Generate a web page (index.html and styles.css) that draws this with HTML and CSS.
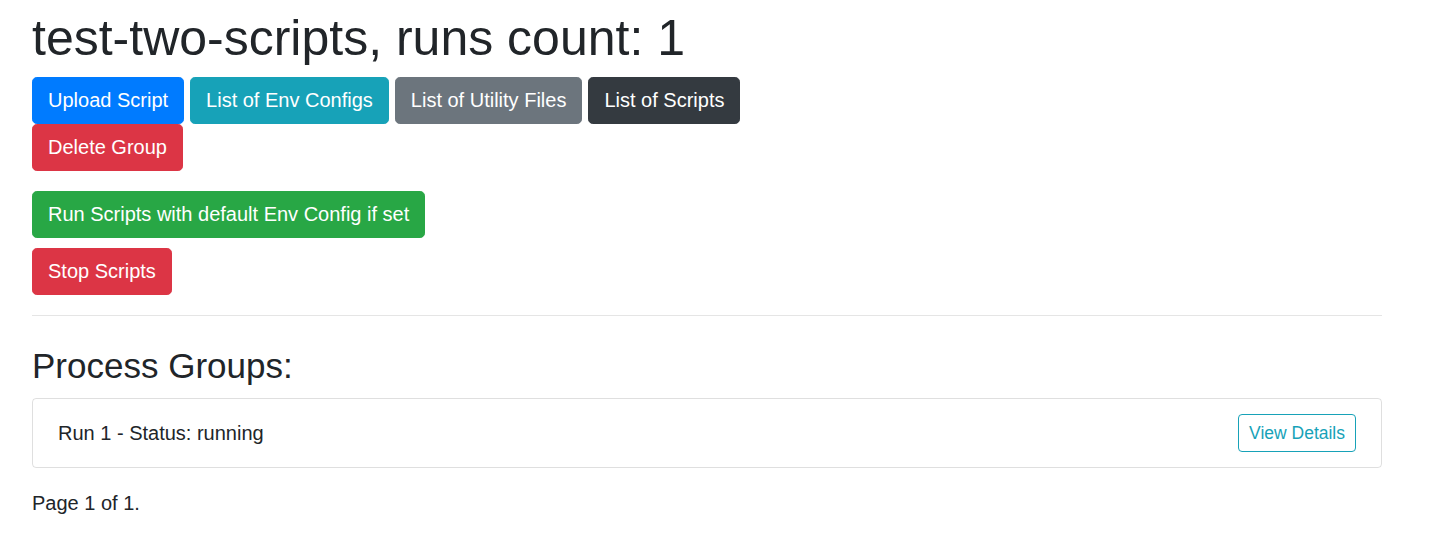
FILE: index.html
```html
<!DOCTYPE html>
<html lang="en">
<head>
<meta charset="utf-8">
<title>test-two-scripts</title>
<link rel="stylesheet" href="styles.css">
</head>
<body>
<div class="page">
  <h1 class="title">test-two-scripts, runs count: 1</h1>
  <div class="toolbar">
    <a class="btn btn-primary">Upload Script</a>
    <a class="btn btn-info">List of Env Configs</a>
    <a class="btn btn-secondary">List of Utility Files</a>
    <a class="btn btn-dark">List of Scripts</a>
    <a class="btn btn-danger">Delete Group</a>
  </div>
  <div class="actions">
    <button class="btn btn-success">Run Scripts with default Env Config if set</button>
    <button class="btn btn-danger">Stop Scripts</button>
  </div>
  <hr class="divider">
  <h2 class="section-title">Process Groups:</h2>
  <div class="card">
    <h5 class="run-title">Run 1 - Status: running</h5>
    <a class="btn-outline-info">View Details</a>
  </div>
  <p class="pager">Page 1 of 1.</p>
</div>
</body>
</html>
```

FILE: styles.css
```css
* { box-sizing: border-box; }

body {
  margin: 0;
  font-family: "Liberation Sans", Arial, Helvetica, sans-serif;
  color: #212529;
  background: #fff;
}

.page {
  padding: 8px 0 0 32px;
  width: 1382px;
}

.title {
  font-size: 50px;
  line-height: 60px;
  font-weight: normal;
  margin: 0 0 9px;
}

.toolbar {
  display: flex;
  flex-wrap: wrap;
  column-gap: 6px;
  max-width: 760px;
}

.btn {
  display: inline-block;
  font-family: inherit;
  font-size: 20px;
  line-height: 29px;
  padding: 8px 15px;
  border: 1px solid transparent;
  border-radius: 4.8px;
  color: #fff;
  cursor: pointer;
  white-space: nowrap;
}

.btn-primary { background: #007bff; border-color: #007bff; }
.btn-info { background: #17a2b8; border-color: #17a2b8; }
.btn-secondary { background: #6c757d; border-color: #6c757d; }
.btn-dark { background: #343a40; border-color: #343a40; }
.btn-danger { background: #dc3545; border-color: #dc3545; }
.btn-success { background: #28a745; border-color: #28a745; }

.actions {
  display: flex;
  flex-direction: column;
  align-items: flex-start;
  gap: 10px;
  margin-top: 20px;
}

.divider {
  border: 0;
  border-top: 1px solid rgba(0, 0, 0, 0.1);
  margin: 20px 0 29px;
  height: 0;
}

.section-title {
  font-size: 35px;
  line-height: 42px;
  font-weight: normal;
  margin: 0 0 11px;
}

.card {
  display: flex;
  justify-content: space-between;
  align-items: center;
  border: 1px solid rgba(0, 0, 0, 0.125);
  border-radius: 4px;
  padding: 15px 25px 15px 25px;
  margin-bottom: 20px;
}

.run-title {
  font-size: 20px;
  line-height: 24px;
  font-weight: normal;
  margin: 0;
}

.btn-outline-info {
  display: inline-block;
  font-size: 17.5px;
  line-height: 24px;
  padding: 6px 10px;
  border: 1px solid #17a2b8;
  border-radius: 4px;
  color: #17a2b8;
  white-space: nowrap;
}

.pager {
  font-size: 20px;
  line-height: 30px;
  margin: 0;
}
```
